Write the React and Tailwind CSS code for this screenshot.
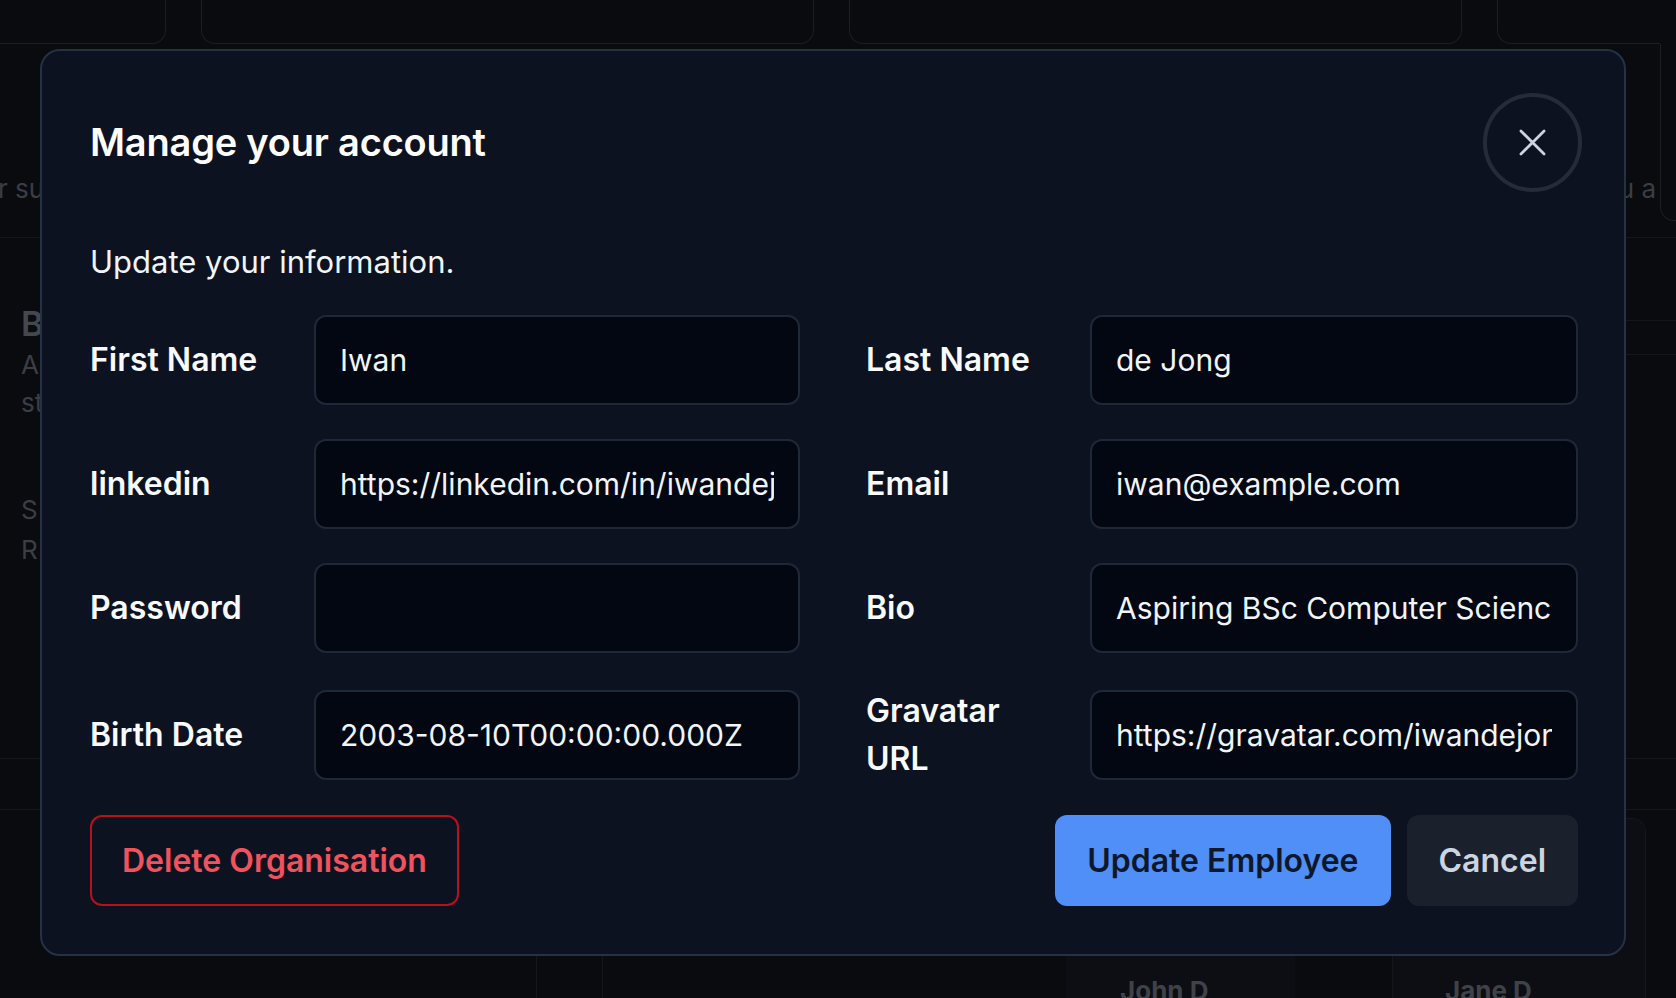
import React from "react";

const fields = [
  ["First Name", "Iwan"],
  ["Last Name", "de Jong"],
  ["linkedin", "https://linkedin.com/in/iwandejong"],
  ["Email", "iwan@example.com"],
  ["Password", ""],
  ["Bio", "Aspiring BSc Computer Science student"],
  ["Birth Date", "2003-08-10T00:00:00.000Z"],
  ["Gravatar URL", "https://gravatar.com/iwandejong"],
];

function Field({ label, value }) {
  return (
    <div className="flex items-center min-w-0">
      <div className="w-[176px] mr-[48px] shrink-0 text-[32px] leading-[48px] font-semibold text-[#f8fafc]">
        {label}
      </div>
      <input
        readOnly
        value={value}
        type="text"
        size={1}
        className="flex-1 min-w-0 w-0 h-[90px] rounded-[12px] border-2 border-[#1f2838] bg-[#030711] px-6 text-[30px] text-[#f1f5f9] outline-none"
      />
    </div>
  );
}

function Background() {
  return (
    <div className="flex flex-col h-full text-[#3b3e44]">
      <div className="flex gap-[35px] -ml-[447px] h-[44px] shrink-0">
        <div className="w-[613px] shrink-0 h-full rounded-b-[14px] border-x border-b border-[#1c1e24]" />
        <div className="w-[613px] shrink-0 h-full rounded-b-[14px] border-x border-b border-[#1c1e24]" />
        <div className="w-[613px] shrink-0 h-full rounded-b-[14px] border-x border-b border-[#1c1e24]" />
        <div className="w-[163px] shrink-0 h-full rounded-bl-[14px] border-l border-b border-[#1c1e24]" />
      </div>
      <div className="flex justify-between items-start h-[194px] shrink-0 border-b border-[#15171b]">
        <div className="-ml-[2px] pt-[128px] text-[26px] leading-[34px] whitespace-nowrap">r subscription</div>
        <div className="flex items-start">
          <div className="pt-[128px] text-[26px] leading-[34px] whitespace-nowrap mr-[4px]">u a</div>
          <div className="w-[16px] h-[177px] rounded-bl-[14px] border-l border-b border-[#1c1e24]" />
        </div>
      </div>
      <div className="flex justify-between h-[521px] shrink-0 border-b border-[#15171b]">
        <div className="pl-[21px] pt-[64px] flex flex-col">
          <div className="text-[34px] leading-[44px] font-semibold text-[#44474d]">B</div>
          <div className="text-[26px] leading-[38px]">A</div>
          <div className="text-[26px] leading-[38px]">st</div>
          <div className="mt-[68px] text-[26px] leading-[40px]">S</div>
          <div className="text-[26px] leading-[40px]">R</div>
        </div>
        <div className="flex flex-col w-[60px]">
          <div className="h-[83px] border-b border-[#15171b]" />
          <div className="h-[34px] border-b border-[#15171b]" />
        </div>
      </div>
      <div className="h-[51px] shrink-0 border-b border-[#15171b]" />
      <div className="flex flex-1 pt-[8px]">
        <div className="w-[537px] shrink-0 border-r border-[#15171b]" />
        <div className="w-[66px] shrink-0 border-r border-[#15171b]" />
        <div className="w-[463px] shrink-0" />
        <div className="w-[229px] shrink-0 bg-[#0c0e13] flex items-end pl-[54px] text-[26px] font-bold leading-[14px] text-[#3f4248] overflow-hidden">John D</div>
        <div className="w-[97px] shrink-0" />
        <div className="w-[254px] shrink-0 rounded-t-[14px] border-x border-t border-[#14161b] bg-[#0c0e13] flex items-end pl-[52px] text-[26px] font-bold leading-[14px] text-[#3f4248] overflow-hidden">Jane D</div>
      </div>
    </div>
  );
}

export default function App() {
  return (
    <div className="relative w-[1676px] h-[998px] overflow-hidden bg-[#0a0b0e] font-['Inter','Noto_Sans',sans-serif]">
      <Background />
      <div className="absolute inset-0">
        <div className="absolute left-[40px] top-[49px] w-[1586px] rounded-[20px] border-2 border-[#253145] bg-[#0c1220] pl-[48px] pr-[46px] pt-[42px] pb-[48px]">
          <div className="flex h-[99px] items-center justify-between">
            <h2 className="text-[38px] font-semibold tracking-[-0.2px] text-white">Manage your account</h2>
            <button className="-mr-[4px] flex h-[99px] w-[99px] items-center justify-center rounded-full border-4 border-[#252c39]">
              <svg width="27" height="27" viewBox="0 0 28 28" fill="none" stroke="#cbd5e1" strokeWidth="2.8" strokeLinecap="round">
                <path d="M2 2L26 26M26 2L2 26" />
              </svg>
            </button>
          </div>
          <p className="mt-[46px] text-[31px] leading-[48px] text-[#f1f5f9]">Update your information.</p>
          <div className="mt-[29px] grid grid-cols-[710px_minmax(0,1fr)] gap-x-[66px] gap-y-[34px] items-center">
            {fields.map(([l, v]) => (
              <Field key={l} label={l} value={v} />
            ))}
          </div>
          <div className="mt-[32px] flex items-center justify-between">
            <button className="h-[91px] rounded-[12px] border-2 border-[#b3121f] px-[30px] text-[32px] font-semibold text-[#f0525e]">
              Delete Organisation
            </button>
            <div className="flex gap-4">
              <button className="h-[91px] rounded-[12px] border-2 border-transparent bg-[#4f8ff7] px-[30px] text-[32px] font-semibold text-[#0f172a]">
                Update Employee
              </button>
              <button className="h-[91px] rounded-[12px] border-2 border-transparent bg-[#1a202c] px-[30px] text-[32px] font-semibold text-[#cbd5e1]">
                Cancel
              </button>
            </div>
          </div>
        </div>
      </div>
    </div>
  );
}
